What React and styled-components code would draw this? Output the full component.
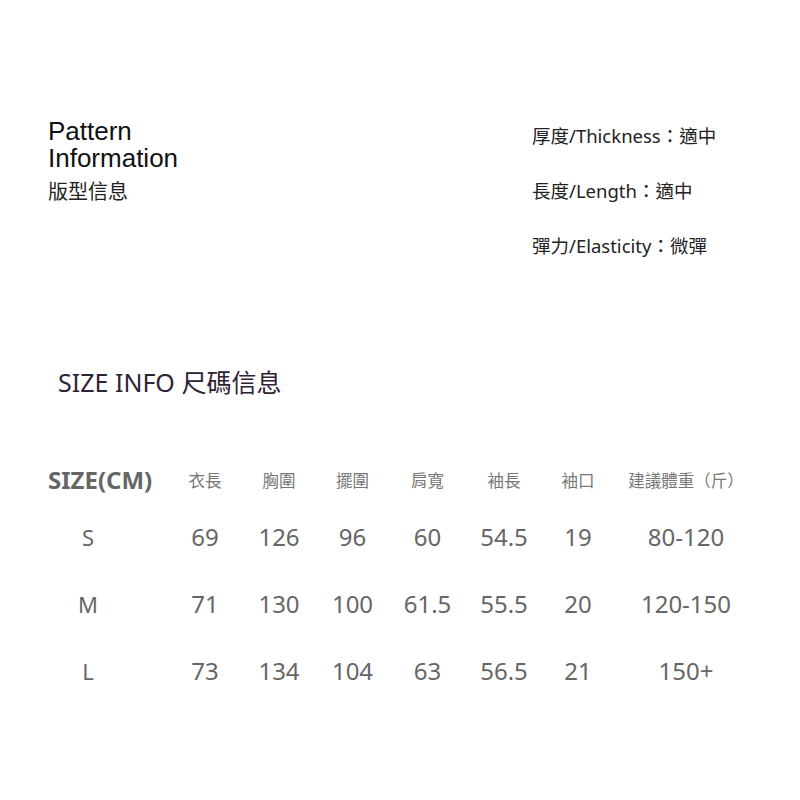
import React from "react";
import styled, { createGlobalStyle } from "styled-components";

const GlobalStyle = createGlobalStyle`
  body {
    margin: 0;
    background: #ffffff;
  }
`;

const attrs = [
  { label: "厚度/Thickness", value: "適中" },
  { label: "長度/Length", value: "適中" },
  { label: "彈力/Elasticity", value: "微彈" },
];

const headers = ["衣長", "胸圍", "擺圍", "肩寬", "袖長", "袖口", "建議體重（斤）"];

const sizes = [
  { size: "S", values: ["69", "126", "96", "60", "54.5", "19", "80-120"] },
  { size: "M", values: ["71", "130", "100", "61.5", "55.5", "20", "120-150"] },
  { size: "L", values: ["73", "134", "104", "63", "56.5", "21", "150+"] },
];

const App = () => {
  return (
    <Page>
      <GlobalStyle />
      <Top>
        <Pattern>
          <PatternTitle>
            Pattern
            <br />
            Information
          </PatternTitle>
          <PatternSub>版型信息</PatternSub>
        </Pattern>
        <AttrList>
          {attrs.map((a) => (
            <Attr key={a.label}>
              {a.label}：{a.value}
            </Attr>
          ))}
        </AttrList>
      </Top>
      <SizeTitle>SIZE INFO 尺碼信息</SizeTitle>
      <Table>
        <HeadCell first>SIZE(CM)</HeadCell>
        {headers.map((h) => (
          <HeadCell key={h}>{h}</HeadCell>
        ))}
        {sizes.map((row) => (
          <React.Fragment key={row.size}>
            <SizeCell>{row.size}</SizeCell>
            {row.values.map((v, i) => (
              <Cell key={i}>{v}</Cell>
            ))}
          </React.Fragment>
        ))}
      </Table>
    </Page>
  );
};

const Page = styled.div`
  width: 800px;
  height: 800px;
  background: #ffffff;
  overflow: hidden;
`;

const Top = styled.div`
  display: flex;
  padding-top: 118px;
  padding-left: 48px;
`;

const Pattern = styled.div`
  width: 484px;
`;

const PatternTitle = styled.div`
  font-family: "Liberation Sans", Arial, sans-serif;
  font-size: 26px;
  line-height: 27px;
  color: #111;
`;

const PatternSub = styled.div`
  margin-top: 6px;
  font-family: "Noto Sans CJK TC", sans-serif;
  font-size: 20px;
  line-height: 26px;
  color: #222;
`;

const AttrList = styled.div`
  display: flex;
  flex-direction: column;
  gap: 30px;
  padding-top: 5px;
`;

const Attr = styled.div`
  font-family: "Noto Sans", "Noto Sans CJK TC", sans-serif;
  font-size: 18.5px;
  line-height: 25px;
  color: #222;
`;

const SizeTitle = styled.div`
  margin-top: 108px;
  padding-left: 58px;
  font-family: "Noto Sans", "Noto Sans CJK TC", sans-serif;
  font-size: 25px;
  line-height: 32px;
  color: #2f2235;
`;

const Table = styled.div`
  display: grid;
  grid-template-columns: 120px 74px 74px 73px 77px 76px 72px 144px;
  grid-template-rows: 47px;
  grid-auto-rows: 67px;
  margin-top: 58px;
  padding-left: 48px;
  align-items: center;
`;

const HeadCell = styled.div`
  font-family: ${(p) => (p.first ? '"Noto Sans", sans-serif' : '"Noto Sans CJK TC", sans-serif')};
  font-size: ${(p) => (p.first ? "24px" : "16.5px")};
  font-weight: ${(p) => (p.first ? 700 : 400)};
  color: ${(p) => (p.first ? "#666" : "#777")};
  text-align: ${(p) => (p.first ? "left" : "center")};
  white-space: nowrap;
`;

const SizeCell = styled.div`
  width: 80px;
  text-align: center;
  font-family: "Noto Sans", sans-serif;
  font-size: 22px;
  color: #666;
`;

const Cell = styled.div`
  text-align: center;
  font-family: "Noto Sans", sans-serif;
  font-size: 24px;
  color: #666;
  white-space: nowrap;
`;

export default App;
